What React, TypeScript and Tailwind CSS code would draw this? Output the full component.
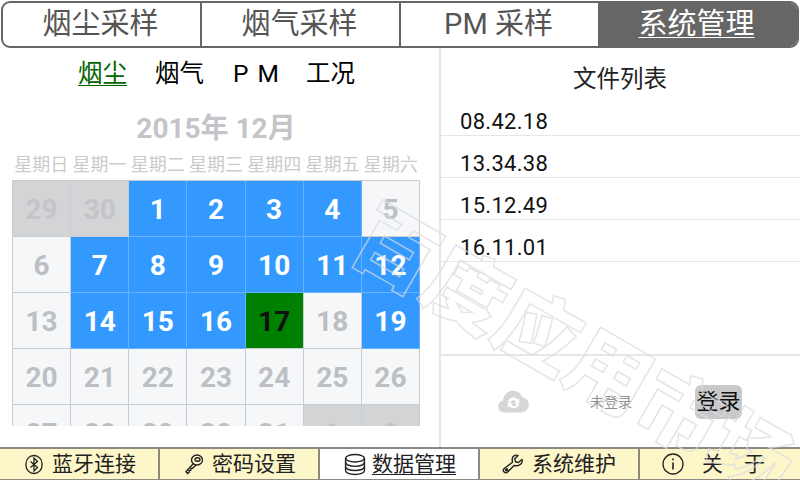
import React from "react";

const FONT = '"Roboto", "Noto Sans CJK SC", sans-serif';

const tabs = ["烟尘采样", "烟气采样", "PM 采样"];

type Kind = "off" | "sel" | "plain" | "today";
const rows: [string, Kind][][] = [
  [["29", "off"], ["30", "off"], ["1", "sel"], ["2", "sel"], ["3", "sel"], ["4", "sel"], ["5", "plain"]],
  [["6", "plain"], ["7", "sel"], ["8", "sel"], ["9", "sel"], ["10", "sel"], ["11", "sel"], ["12", "sel"]],
  [["13", "plain"], ["14", "sel"], ["15", "sel"], ["16", "sel"], ["17", "today"], ["18", "plain"], ["19", "sel"]],
  [["20", "plain"], ["21", "plain"], ["22", "plain"], ["23", "plain"], ["24", "plain"], ["25", "plain"], ["26", "plain"]],
  [["27", "plain"], ["28", "plain"], ["29", "plain"], ["30", "plain"], ["31", "plain"], ["1", "off"], ["2", "off"]],
];

const kindClass: Record<Kind, string> = {
  off: "bg-[#d3d4d6] text-[#c3c5c8]",
  sel: "bg-[#3399ff] text-white",
  plain: "bg-[#f5f7f9] text-[#bcbfc3]",
  today: "bg-[#008000] text-[#111111]",
};

const Bluetooth = () => (
  <svg width="20" height="21" viewBox="0 0 20 20" fill="none" stroke="#222" strokeWidth="1.3">
    <rect x="2" y="1" width="16" height="18" rx="8" />
    <path d="M6.5 7l7 6-3.5 3.5v-13L13.5 7l-7 6" />
  </svg>
);
const Key = () => (
  <svg width="22" height="22" viewBox="0 0 22 22" fill="none" stroke="#222" strokeWidth="1.4">
    <ellipse cx="14" cy="7" rx="5.5" ry="5" />
    <ellipse cx="14.5" cy="6.5" rx="2.5" ry="1.8" />
    <path d="M10.5 10.5L3 18.5l1.5 2 2-1.5-.5-1.5 1.8-.3.2-1.7 1.5-.2L13 12" />
  </svg>
);
const Db = () => (
  <svg width="24" height="23" viewBox="0 0 22 22" fill="none" stroke="#222" strokeWidth="1.4">
    <ellipse cx="11" cy="5" rx="9" ry="3.6" />
    <path d="M2 5v12c0 2 4 3.6 9 3.6s9-1.6 9-3.6V5" />
    <path d="M2 9.2c0 2 4 3.6 9 3.6s9-1.6 9-3.6M2 13.2c0 2 4 3.6 9 3.6s9-1.6 9-3.6" />
  </svg>
);
const Wrench = () => (
  <svg width="22" height="22" viewBox="0 0 22 22" fill="none" stroke="#222" strokeWidth="1.4" strokeLinejoin="round">
    <path d="M20 6.5l-3.6 3-3-.8-.7-3 3.4-3.3c-3-1-6.3.8-5.9 4.8l.3 2L2.2 15.5c-1.5 1.5-.6 3 0 3.6.7.7 2.2 1.3 3.5-.1l6.3-6.5 2 .3C18 13 21 10 20 6.5z" />
    <circle cx="4.6" cy="16.8" r="1" />
  </svg>
);
const Info = () => (
  <svg width="22" height="22" viewBox="0 0 22 22" fill="none" stroke="#222" strokeWidth="1.3">
    <circle cx="11" cy="11" r="10" />
    <path d="M11 9.5v7M11 5.5v1.8" strokeWidth="1.6" />
  </svg>
);

const foot = [
  { t: "蓝牙连接", i: <Bluetooth />, pad: "pl-[24px]", box: "w-[28px]" },
  { t: "密码设置", i: <Key />, pad: "pl-[23px]", box: "w-[29px]" },
  { t: "数据管理", i: <Db />, pad: "pl-[23px]", box: "w-[29px]", active: true },
  { t: "系统维护", i: <Wrench />, pad: "pl-[22px]", box: "w-[30px]" },
  { t: "关　于", i: <Info />, pad: "pl-[22px]", box: "w-[40px]" },
];

export default function App() {
  return (
    <div
      className="relative w-[800px] h-[480px] overflow-hidden bg-white flex flex-col"
      style={{ fontFamily: FONT }}
    >
      {/* top tabs */}
      <div className="h-[48px] pt-[1px] px-[1px] shrink-0">
        <div className="flex h-[47px] border-2 border-[#666666] rounded-[9px] overflow-hidden">
          {tabs.map((x) => (
            <div
              key={x}
              className="w-[199px] flex items-center justify-center pr-[2px] border-r-2 border-[#666666] text-[29px] leading-none text-[#555555]"
            >
              {x}
            </div>
          ))}
          <div className="flex-1 flex items-center justify-center pr-[4px] bg-[#666666] text-[29px] leading-none text-white underline underline-offset-[3px] decoration-[1px]">
            系统管理
          </div>
        </div>
      </div>

      <div className="flex flex-1 min-h-0">
        {/* left panel */}
        <div className="w-[441px] shrink-0 border-r-2 border-[#e6e6e6] flex flex-col">
          <div className="flex h-[50px] shrink-0 pl-[78px] pt-[10px] text-[24.5px] leading-[32px] text-black">
            <span className="w-[77px] text-[#006400] underline underline-offset-[3px] decoration-[1px]">烟尘</span>
            <span className="w-[78px]">烟气</span>
            <span className="w-[73px] tracking-[1.5px]">P M</span>
            <span>工况</span>
          </div>
          <div className="mt-[15px] h-[32px] shrink-0 w-[432px] flex items-center justify-center text-[28px] font-bold leading-none text-[#c3c5c8]">
            2015年 12月
          </div>
          <div className="ml-[12px] mt-[9px] w-[408px] grid grid-cols-7 text-[18px] leading-[22px] text-[#c9cbcd] whitespace-nowrap">
            {["日", "一", "二", "三", "四", "五", "六"].map((d) => (
              <span key={d} className="text-center">星期{d}</span>
            ))}
          </div>
          <div className="ml-[12px] mt-[4px] w-[408px] h-[246px] overflow-hidden border-l border-t border-[#c9ccd0] shrink-0">
            <div className="grid grid-cols-7 auto-rows-[56px]">
              {rows.flat().map(([d, k], i) => (
                <div
                  key={i}
                  className={`${kindClass[k]} flex items-center justify-center pt-[2px] border-r border-b ${
                    k === "sel" ? "border-[#66b2ff]" : "border-[#c9ccd0]"
                  } text-[28px] font-bold leading-none`}
                >
                  {d}
                </div>
              ))}
            </div>
          </div>
        </div>

        {/* right panel */}
        <div className="flex-1 flex flex-col min-w-0 -ml-[1px]">
          <div className="h-[46px] pt-[12px] text-center text-[23.5px] leading-[38px] text-[#222222] shrink-0">文件列表</div>
          {["08.42.18", "13.34.38", "15.12.49", "16.11.01"].map((t) => (
            <div
              key={t}
              className="h-[42px] shrink-0 pl-[20px] flex items-center pt-[14px] border-b border-[#e6e6e6] text-[22px] tracking-[0.3px] text-[#111111] leading-none"
            >
              {t}
            </div>
          ))}
          <div className="h-[94px] shrink-0 border-b-2 border-[#e6e6e6]"></div>
          <div className="flex-1 relative flex items-center">
            <svg className="ml-[57px] shrink-0" width="33" height="23" viewBox="0 0 34 24">
              <path d="M8 23.5C3.5 23.5 1 20.5 1 17c0-3 2-5.5 5-6C6.5 5 11 .8 16.5.8c4.5 0 8 2.5 9.5 6.7 4 .5 7 3.7 7 8 0 4.5-3.5 8-8 8z" fill="#d6d6d6" />
              <path d="M11 13a6 6 0 0 1 10.5-3l1.5-1.5V14h-5.5l2-2a3.5 3.5 0 0 0-6 1zM23 14a6 6 0 0 1-10.5 3L11 18.5V13.500h5.500l-2 2a3.500 3.500 0 0 0 6-1z" fill="#ffffff" />
            </svg>
            <span className="ml-[60px] text-[14px] leading-none text-[#8f8f8f] w-[44px] whitespace-nowrap">未登录</span>
            <div className="ml-[61px] w-[47px] h-[34px] rounded-[6px] bg-[#c9c9c9] flex items-center justify-center text-[22px] leading-none text-[#111111] whitespace-nowrap">
              登录
            </div>
          </div>
        </div>
      </div>

      {/* bottom bar */}
      <div className="h-[33px] shrink-0 grid grid-cols-5 border-t-2 border-b border-[#8a8a82]">
        {foot.map((f, i) => (
          <div
            key={f.t}
            className={`flex items-center ${f.pad} ${f.active ? "bg-white" : "bg-[#fdf6c9]"} ${
              i < 4 ? "border-r-2 border-[#8a8a82]" : ""
            } text-[21px] leading-none text-[#222222]`}
          >
            <span className={`${f.box} shrink-0 flex items-center`}>{f.i}</span>
            <span className={f.active ? "underline underline-offset-[3px] decoration-[1px] whitespace-pre" : "whitespace-pre"}>{f.t}</span>
          </div>
        ))}
      </div>

      {/* watermark */}
      <div
        className="absolute left-[380px] top-[195px] origin-top-left rotate-[30deg] whitespace-nowrap text-[82px] font-black leading-none text-transparent pointer-events-none opacity-70"
        style={{ WebkitTextStroke: "1.5px #d8dbe0" }}
      >
        百度应用市场
      </div>
    </div>
  );
}
